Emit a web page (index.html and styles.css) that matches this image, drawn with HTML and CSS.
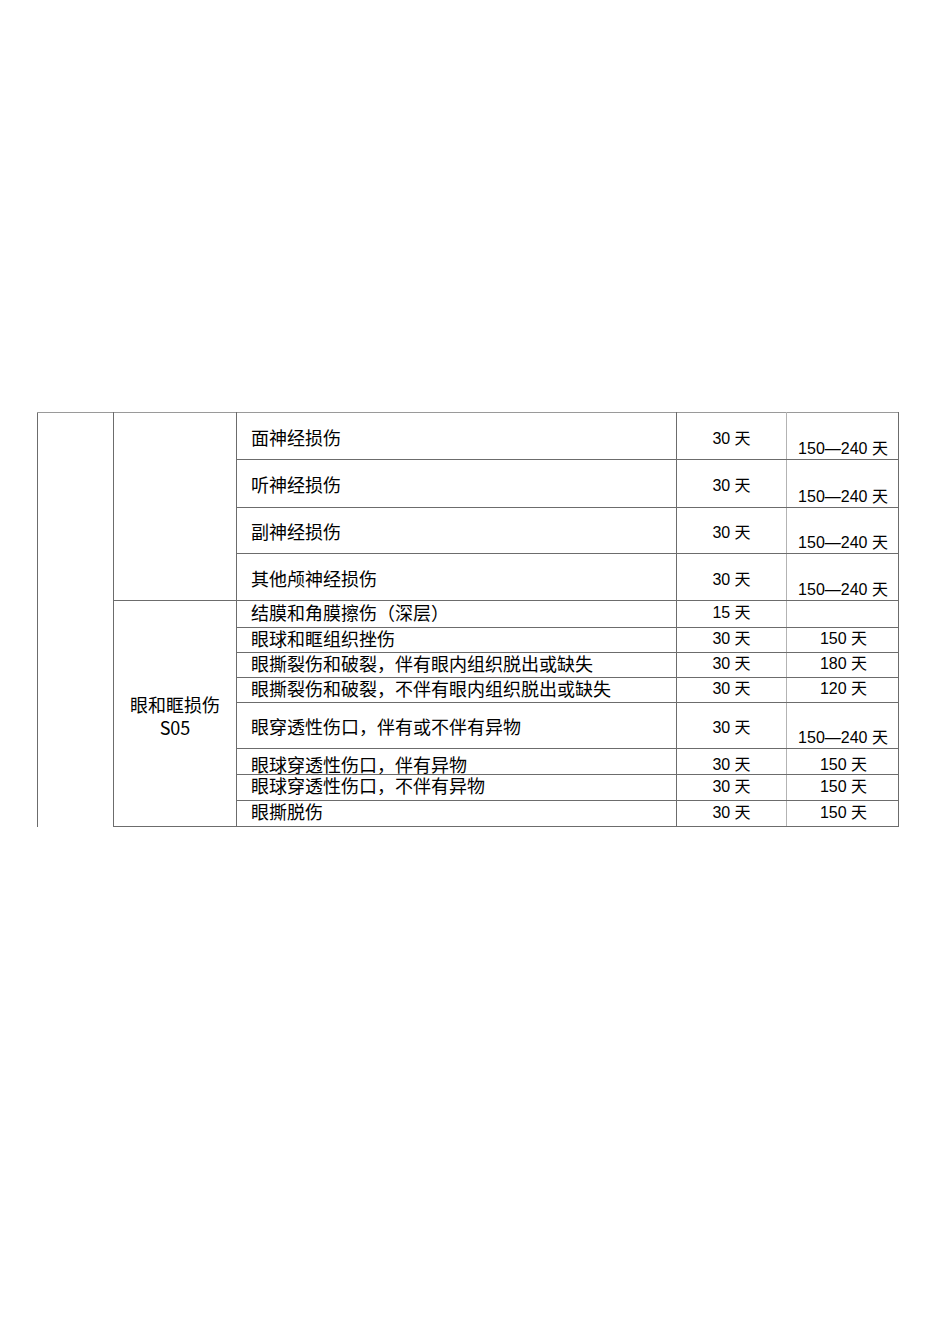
FILE: index.html
```html
<!DOCTYPE html>
<html lang="zh-CN">
<head>
<meta charset="utf-8">
<title>损伤休工期表</title>
<link rel="stylesheet" href="styles.css">
</head>
<body>
<div class="page">
  <table class="grid">
    <colgroup>
      <col class="w1"><col class="w2"><col class="w3"><col class="w4"><col class="w5">
    </colgroup>
    <tbody>
      <tr class="h47 first">
        <td class="c1" rowspan="12"></td>
        <td class="c2" rowspan="4"></td>
        <td class="c3 tall">面神经损伤</td>
        <td class="c4 tall">30 天</td>
        <td class="c5 low">150—240 天</td>
      </tr>
      <tr class="h48">
        <td class="c3 tall">听神经损伤</td>
        <td class="c4 tall">30 天</td>
        <td class="c5 low">150—240 天</td>
      </tr>
      <tr class="h46">
        <td class="c3 tall">副神经损伤</td>
        <td class="c4 tall">30 天</td>
        <td class="c5 low">150—240 天</td>
      </tr>
      <tr class="h47">
        <td class="c3 tall">其他颅神经损伤</td>
        <td class="c4 tall">30 天</td>
        <td class="c5 low">150—240 天</td>
      </tr>
      <tr class="h27 small">
        <td class="c2 group" rowspan="8">眼和眶损伤<br>S05</td>
        <td class="c3">结膜和角膜擦伤（深层）</td>
        <td class="c4">15 天</td>
        <td class="c5"></td>
      </tr>
      <tr class="h25 small">
        <td class="c3">眼球和眶组织挫伤</td>
        <td class="c4">30 天</td>
        <td class="c5">150 天</td>
      </tr>
      <tr class="h25 small">
        <td class="c3">眼撕裂伤和破裂，伴有眼内组织脱出或缺失</td>
        <td class="c4">30 天</td>
        <td class="c5">180 天</td>
      </tr>
      <tr class="h25 small">
        <td class="c3">眼撕裂伤和破裂，不伴有眼内组织脱出或缺失</td>
        <td class="c4">30 天</td>
        <td class="c5">120 天</td>
      </tr>
      <tr class="h46">
        <td class="c3 tall">眼穿透性伤口，伴有或不伴有异物</td>
        <td class="c4 tall">30 天</td>
        <td class="c5 low">150—240 天</td>
      </tr>
      <tr class="h26">
        <td class="c3 sink">眼球穿透性伤口，伴有异物</td>
        <td class="c4 sink">30 天</td>
        <td class="c5 sink">150 天</td>
      </tr>
      <tr class="h26 small">
        <td class="c3">眼球穿透性伤口，不伴有异物</td>
        <td class="c4">30 天</td>
        <td class="c5">150 天</td>
      </tr>
      <tr class="h26 small">
        <td class="c3">眼撕脱伤</td>
        <td class="c4">30 天</td>
        <td class="c5">150 天</td>
      </tr>
    </tbody>
  </table>
</div>
</body>
</html>
```

FILE: styles.css
```css
html, body {
  margin: 0;
  padding: 0;
  background: #ffffff;
}

.page {
  padding: 412px 0 0 37px;
}

.grid {
  border-collapse: collapse;
  table-layout: fixed;
  width: 861px;
  color: #000000;
}

.w1 { width: 76px; }
.w2 { width: 123px; }
.w3 { width: 440px; }
.w4 { width: 110px; }
.w5 { width: 112px; }

.grid td {
  border: 1px solid #6c6c6c;
  padding: 0;
  vertical-align: middle;
  line-height: 22px;
  overflow: visible;
  white-space: nowrap;
}

.first td {
  border-top-color: #9a9a9a;
}

.c1 {
  border-bottom: none !important;
}

.c2 {
  text-align: center;
  font-family: "Noto Sans CJK SC", "Noto Sans", sans-serif;
  font-size: 18px;
}

.group {
  line-height: 23px !important;
  padding-top: 4px !important;
}

.c3 {
  font-family: "Noto Sans CJK SC", sans-serif;
  font-size: 18px;
  padding-left: 14px !important;
}

.c4, .c5 {
  text-align: center;
  font-family: "Liberation Sans", "Noto Sans CJK SC", sans-serif;
  font-size: 16px;
}

.c4 {
  border-right-color: #b3b3b3 !important;
}

.c5 {
  border-left-color: #b3b3b3 !important;
  padding-left: 2px !important;
}

.c3.tall {
  padding-top: 1px !important;
}

.c4.tall {
  padding-top: 5px !important;
}

.small .c3 {
  line-height: 18px;
  padding-bottom: 5px;
}

.small .c4, .small .c5 {
  line-height: 18px;
  padding-bottom: 2px;
}

.low {
  vertical-align: bottom !important;
  line-height: 16px !important;
  padding-bottom: 2px !important;
  padding-left: 1px !important;
}

.sink {
  vertical-align: bottom !important;
  line-height: 18px !important;
  padding-bottom: 0 !important;
}

.c3.sink {
  padding-bottom: 1px !important;
}

.h47 { height: 47px; }
.h48 { height: 48px; }
.h46 { height: 46px; }
.h27 { height: 27px; }
.h25 { height: 25px; }
.h26 { height: 26px; }
```
